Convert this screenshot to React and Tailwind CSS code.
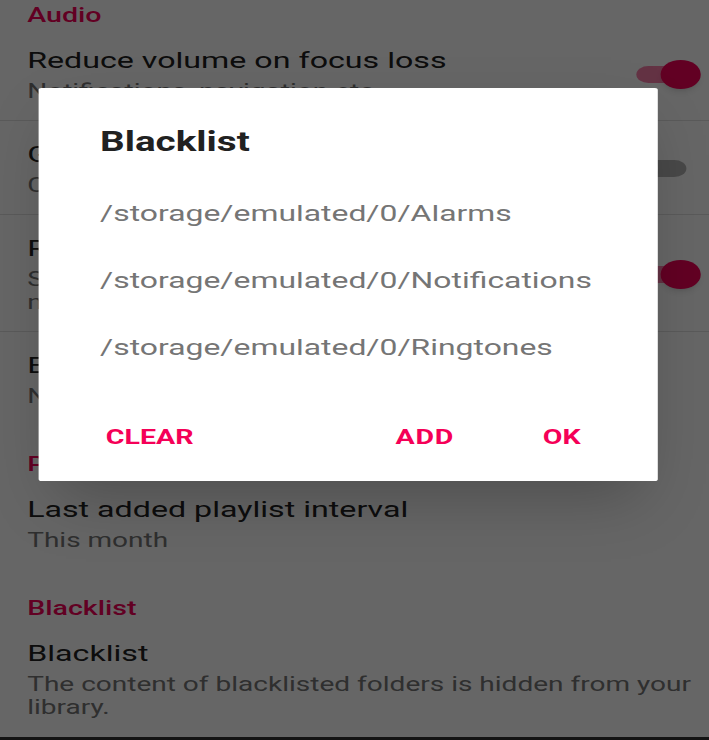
import { useState } from "react";

// the capture is stretched sideways, so the page is laid out narrow and widened with scale-x
function Header({ children, first }) {
  return (
    <div
      className={`${first ? "pt-[3px]" : "pt-[27px]"} pl-[19px] text-[20px] leading-[24px] font-medium text-[#f50057]`}
    >
      {children}
    </div>
  );
}

function Toggle({ on }) {
  return (
    <div className="relative w-[46px] h-[29px] shrink-0">
      <div
        className={`absolute left-[1px] top-[6px] h-[17px] rounded-full ${on ? "right-[7px] bg-[#f50057]/50" : "right-[10px] bg-[#b5b5b5]"}`}
      ></div>
      <div
        className={`absolute top-0 w-[28px] h-[29px] rounded-full shadow-md ${on ? "right-0 bg-[#f50057]" : "left-[-12px] bg-[#fafafa]"}`}
      ></div>
    </div>
  );
}

function Row({ title, subtitle, toggle, divider = true }) {
  return (
    <div
      className={`flex items-center pl-[19px] pr-[6px] pt-[19px] pb-[17px] ${divider ? "border-b border-[#e0e0e0]" : ""}`}
    >
      <div className="flex-1 min-w-0">
        <div className="text-[22.5px] leading-[28px] text-[#212121]">{title}</div>
        <div className="mt-[6px] text-[19.6px] leading-[23px] text-[#757575]">{subtitle}</div>
      </div>
      {toggle !== undefined && <Toggle on={toggle} />}
    </div>
  );
}

export default function App() {
  const [folders] = useState([
    "/storage/emulated/0/Alarms",
    "/storage/emulated/0/Notifications",
    "/storage/emulated/0/Ringtones",
  ]);

  return (
    <div className="w-[709px] h-[740px] overflow-hidden bg-white font-['Roboto',sans-serif]">
      <div className="relative w-[496px] h-[740px] origin-top-left scale-x-[1.43] flex flex-col">
        <div className="flex-1">
          <Header first>Audio</Header>
          <Row title="Reduce volume on focus loss" subtitle="Notifications, navigation etc." toggle={true} />
          <Row title="Gapless playback" subtitle="Can cause playback issues on some devices." toggle={false} />
          <Row
            title="Remember last tab"
            subtitle={
              <>
                Show the last opened tab on start
                <br />
                next time you open the app.
              </>
            }
            toggle={true}
          />
          <Row title="Equalizer" subtitle="No equalizer found" divider={false} />

          <Header>Playlists</Header>
          <Row title="Last added playlist interval" subtitle="This month" divider={false} />

          <Header>Blacklist</Header>
          <Row
            title="Blacklist"
            subtitle="The content of blacklisted folders is hidden from your library."
            divider={false}
          />
        </div>
        <div className="h-[3px] bg-[#333]"></div>

        {/* scrim */}
        <div className="absolute inset-0 bg-black/60"></div>

        {/* dialog */}
        <div className="absolute left-[27px] top-[88px] w-[433px] h-[393px] bg-white rounded-[2px] shadow-2xl">
          <div className="pt-[38px] pl-[43px] text-[27px] leading-[32px] font-bold text-[#212121]">
            Blacklist
          </div>
          <div className="mt-[22px] pl-[43px]">
            {folders.map((f) => (
              <div key={f} className="h-[67px] flex items-center text-[22.3px] text-[#757575]">
                {f}
              </div>
            ))}
          </div>
          <div className="mt-[36px] h-[40px] flex items-center pl-[47px] pr-[54px] text-[20px] font-bold text-[#f50057]">
            <span>CLEAR</span>
            <span className="ml-auto tracking-[0.5px]">ADD</span>
            <span className="ml-[62px]">OK</span>
          </div>
        </div>
      </div>
    </div>
  );
}
